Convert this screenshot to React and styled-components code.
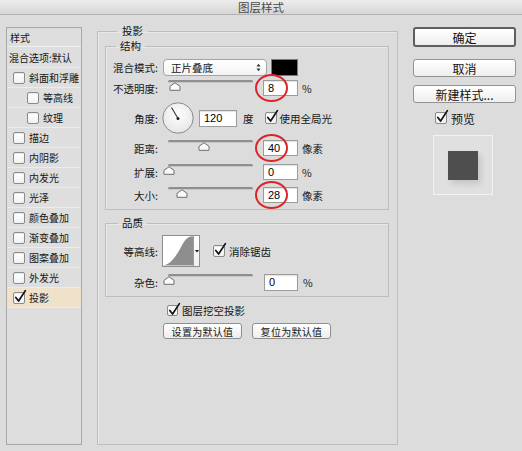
import React from 'react';
import styled, { createGlobalStyle } from 'styled-components';

const Global = createGlobalStyle`
  html, body { margin: 0; padding: 0; background: #dcdcdc; }
  body { font-family: "Noto Sans CJK SC", "Noto Sans", sans-serif; color: #161616; }
  * { box-sizing: border-box; }
`;

const Window = styled.div`
  width: 522px;
  height: 451px;
  display: flex;
  flex-direction: column;
  background: #dcdcdc;
  overflow: hidden;
`;

const TitleBar = styled.div`
  height: 15px;
  flex: none;
  display: flex;
  align-items: center;
  justify-content: center;
  background: linear-gradient(#ededed, #d6d6d6);
  border-bottom: 1px solid #b2b2b2;
  font-size: 11.5px;
  line-height: 12px;
  color: #484848;
`;

const Body = styled.div`
  flex: 1;
  display: flex;
  align-items: flex-start;
  padding: 9px 0 0 6px;
`;

/* ---------- left style list ---------- */
const StyleList = styled.div`
  margin-top: 3px;
  width: 76px;
  height: 418px;
  border: 1px solid #a8a8a8;
  background: #dedede;
  display: flex;
  flex-direction: column;
  font-size: 10px;
`;

const ListHeader = styled.div`
  height: 19px;
  display: flex;
  align-items: center;
  padding-left: 3px;
  border-bottom: 1px solid #efefef;
`;

const ListItem = styled.div`
  height: ${p => p.$h || 20}px;
  display: flex;
  align-items: center;
  gap: 4px;
  padding-left: ${p => p.$indent ? 20 : p.$plain ? 2 : 6}px;
  border-bottom: 1px solid #ececec;
  background: ${p => p.$active ? '#f0e1ca' : 'transparent'};
  white-space: nowrap;
`;

/* ---------- checkbox ---------- */
const Box = styled.span`
  position: relative;
  flex: none;
  width: ${p => p.$size || 12}px;
  height: ${p => p.$size || 12}px;
  border: 1px solid #8a8a8a;
  border-radius: 2px;
  background: linear-gradient(#ffffff, #f1f1f1);
  box-shadow: inset 0 1px 1px rgba(0,0,0,0.08);
`;

const CheckMark = styled.svg`
  position: absolute;
  left: 0px;
  top: -3px;
  overflow: visible;
`;

function Checkbox({ checked, size }) {
  return (
    <Box $size={size}>
      {checked && (
        <CheckMark width="12" height="13" viewBox="0 0 12 13">
          <path d="M1.8 7.4 L4.6 11 L11.4 0.6" fill="none" stroke="#111" strokeWidth="1.7" strokeLinecap="round" strokeLinejoin="round" />
        </CheckMark>
      )}
    </Box>
  );
}

/* ---------- group boxes ---------- */
const Group = styled.fieldset`
  margin: ${p => p.$mt || 0}px 0 0 0;
  min-width: 0;
  border: 1px solid #bdbdbd;
  box-shadow: inset 1px 1px 0 #e8e8e8;
  padding: ${p => p.$pad || '4px 0 4px 0'};
  font-size: 10.5px;
`;

const OuterGroup = styled(Group)`
  margin: 0 0 0 15px;
  width: 301px;
  height: 421px;
  padding: 1px 8px 0 7px;
`;

const Legend = styled.legend`
  margin-left: ${p => p.$ml || 10}px;
  padding: 0 ${p => p.$px || 4}px;
  font-size: 10.5px;
  line-height: 14px;
  color: #111;
`;

const Row = styled.div`
  display: flex;
  align-items: center;
  height: ${p => p.$h || 20}px;
  margin-top: ${p => p.$mt || 0}px;
  white-space: nowrap;
`;

const Label = styled.span`
  width: 52px;
  flex: none;
  text-align: right;
`;

const Gap = styled.span`
  flex: none;
  width: ${p => p.$w}px;
`;

/* select */
const Select = styled.div`
  width: 104px;
  height: 17px;
  border: 1px solid #a4a4a4;
  border-radius: 4px;
  background: linear-gradient(#ffffff, #f3f3f3);
  display: flex;
  align-items: center;
  justify-content: space-between;
  padding: 0 5px 0 7px;
  font-size: 10.5px;
`;

const Swatch = styled.div`
  width: 27px;
  height: 17px;
  background: #000;
  border: 1px solid #7a7a7a;
`;

/* slider */
const SliderWrap = styled.div`
  position: relative;
  width: 85px;
  height: 12px;
  align-self: flex-start;
  margin-top: 2px;
  flex: none;
`;

const Track = styled.div`
  height: 3px;
  border-radius: 2px;
  background: #8f8f8f;
  border-bottom: 1px solid #c8c8c8;
`;

const Thumb = styled.svg`
  position: absolute;
  top: 2px;
`;

function Slider({ pos }) {
  return (
    <SliderWrap>
      <Track />
      <Thumb width="12" height="9" viewBox="0 0 12 9" style={{ left: pos }}>
        <path d="M1 8.3 L1 4.3 L6 0.8 L11 4.3 L11 8.3 Z" fill="#fafafa" stroke="#6e6e6e" strokeWidth="1" />
      </Thumb>
    </SliderWrap>
  );
}

/* number field */
const FieldWrap = styled.div`
  position: relative;
  flex: none;
`;

const Field = styled.div`
  width: ${p => p.$w || 35}px;
  height: ${p => p.$h || 16}px;
  background: #fff;
  border: 1px solid #9c9c9c;
  box-shadow: inset 0 1px 1px rgba(0,0,0,0.12);
  display: flex;
  align-items: center;
  padding-left: 4px;
  font-family: "Liberation Sans", Arial, sans-serif;
  font-size: 11px;
  color: #000;
`;

const RedRing = styled.div`
  position: absolute;
  left: -8px;
  top: -6px;
  width: 33px;
  height: 28px;
  border: 2.5px solid #d9262a;
  border-radius: 50%;
  pointer-events: none;
`;

const Unit = styled.span`
  margin-left: ${p => p.$ml || 4}px;
`;

/* dial */
const Dial = styled.svg`
  flex: none;
  display: block;
`;

/* contour */
const Contour = styled.div`
  flex: none;
  width: 38px;
  height: 32px;
  border: 1px solid #8e8e8e;
  background: #fff;
  display: flex;
`;

const ContourGraph = styled.svg`
  display: block;
  border-right: 1px solid #9a9a9a;
`;

const ContourArrow = styled.div`
  flex: 1;
  display: flex;
  align-items: center;
  justify-content: center;
  background: linear-gradient(#ffffff, #f0f0f0);
`;

const Buttons = styled.div`
  display: flex;
  gap: 10px;
  margin-top: 7px;
  padding-left: 58px;
`;

const SmallButton = styled.div`
  width: 79px;
  height: 16px;
  border: 1px solid #8f8f8f;
  border-radius: 3px;
  background: linear-gradient(#ffffff, #ededed);
  display: flex;
  align-items: center;
  justify-content: center;
  font-size: 10px;
  letter-spacing: 0.3px;
`;

const CheckLine = styled.div`
  display: flex;
  align-items: center;
  gap: 4px;
  height: 12px;
  margin-top: ${p => p.$mt || 0}px;
  padding-left: ${p => p.$pl || 0}px;
  font-size: ${p => p.$fs || 10.5}px;
  white-space: nowrap;
`;

/* ---------- right column ---------- */
const Side = styled.div`
  margin: 3px 0 0 15px;
  width: 103px;
  display: flex;
  flex-direction: column;
`;

const Button = styled.div`
  height: ${p => p.$h || 18}px;
  margin-top: ${p => p.$mt || 0}px;
  border: ${p => p.$primary ? '2px solid #5f5f5f' : '1px solid #939393'};
  border-radius: 3px;
  background: linear-gradient(#ffffff, #eeeeee);
  display: flex;
  align-items: center;
  justify-content: center;
  font-size: 12px;
  color: #111;
`;

const Preview = styled.div`
  margin: 11px 0 0 20px;
  width: 60px;
  height: 60px;
  border: 1px solid #f2f2f2;
  background: #e0e0e0;
  display: flex;
  align-items: center;
  justify-content: center;
`;

const PreviewSquare = styled.div`
  width: 30px;
  height: 29px;
  background: #4e4e4e;
  box-shadow: 3px 4px 6px rgba(0,0,0,0.12);
`;

export default function App() {
  const left = [
    { t: '斜面和浮雕' },
    { t: '等高线', indent: true },
    { t: '纹理', indent: true },
    { t: '描边' },
    { t: '内阴影' },
    { t: '内发光' },
    { t: '光泽' },
    { t: '颜色叠加' },
    { t: '渐变叠加' },
    { t: '图案叠加' },
    { t: '外发光' },
    { t: '投影', checked: true, active: true },
  ];
  return (
    <>
      <Global />
      <Window>
        <TitleBar>图层样式</TitleBar>
        <Body>
          <StyleList>
            <ListHeader>样式</ListHeader>
            <ListItem $plain $h={21}>混合选项:默认</ListItem>
            {left.map(it => (
              <ListItem key={it.t} $indent={it.indent} $active={it.active}>
                <Checkbox checked={it.checked} />
                <span>{it.t}</span>
              </ListItem>
            ))}
          </StyleList>

          <OuterGroup>
            <Legend $ml={12} $px={5}>投影</Legend>

            <Group $pad="4px 0 4px 0">
              <Legend $ml={10}>结构</Legend>
              <Row>
                <Label>混合模式:</Label>
                <Gap $w={5} />
                <Select>
                  <span>正片叠底</span>
                  <svg width="5" height="9" viewBox="0 0 5 9">
                    <path d="M0.5 3.5 L2.5 0.8 L4.5 3.5 Z M0.5 5.5 L2.5 8.2 L4.5 5.5 Z" fill="#333" />
                  </svg>
                </Select>
                <Gap $w={4} />
                <Swatch />
              </Row>
              <Row $mt={1}>
                <Label>不透明度:</Label>
                <Gap $w={10} />
                <Slider pos={1} />
                <Gap $w={10} />
                <FieldWrap>
                  <Field>8</Field>
                  <RedRing />
                </FieldWrap>
                <Unit>%</Unit>
              </Row>
              <Row $mt={4} $h={32}>
                <Label>角度:</Label>
                <Gap $w={4} />
                <Dial width="32" height="32" viewBox="0 0 32 32">
                  <defs>
                    <radialGradient id="dialg" cx="50%" cy="40%" r="60%">
                      <stop offset="0%" stopColor="#ffffff" />
                      <stop offset="100%" stopColor="#e6e6e6" />
                    </radialGradient>
                  </defs>
                  <circle cx="16" cy="16" r="15.2" fill="url(#dialg)" stroke="#8a8a8a" strokeWidth="1" />
                  <line x1="16" y1="16.5" x2="9.5" y2="5.5" stroke="#333" strokeWidth="1.1" />
                  <circle cx="16" cy="16.5" r="1.5" fill="#222" />
                </Dial>
                <Gap $w={5} />
                <Field $w={38} $h={17}>120</Field>
                <Unit $ml={6}>度</Unit>
                <Gap $w={11} />
                <Checkbox checked />
                <Unit $ml={3}>使用全局光</Unit>
              </Row>
              <Row $mt={4}>
                <Label>距离:</Label>
                <Gap $w={10} />
                <Slider pos={30} />
                <Gap $w={10} />
                <FieldWrap>
                  <Field>40</Field>
                  <RedRing />
                </FieldWrap>
                <Unit>像素</Unit>
              </Row>
              <Row $mt={4}>
                <Label>扩展:</Label>
                <Gap $w={10} />
                <Slider pos={-5} />
                <Gap $w={10} />
                <Field>0</Field>
                <Unit>%</Unit>
              </Row>
              <Row $mt={3}>
                <Label>大小:</Label>
                <Gap $w={10} />
                <Slider pos={8} />
                <Gap $w={10} />
                <FieldWrap>
                  <Field>28</Field>
                  <RedRing />
                </FieldWrap>
                <Unit>像素</Unit>
              </Row>
            </Group>

            <Group $mt={6} $pad="4px 0 4px 0">
              <Legend $ml={12}>品质</Legend>
              <Row $h={34}>
                <Label>等高线:</Label>
                <Gap $w={4} />
                <Contour>
                  <ContourGraph width="31" height="30" viewBox="0 0 31 30">
                    <path d="M0 30 C9 28.5 14 19 18.5 11 C22 4.5 24.5 1 28.5 0 L31 0 L31 30 Z" fill="#8e8e8e" />
                  </ContourGraph>
                  <ContourArrow>
                    <svg width="4" height="3" viewBox="0 0 4 3">
                      <path d="M0 0 L4 0 L2 2.5 Z" fill="#111" />
                    </svg>
                  </ContourArrow>
                </Contour>
                <Gap $w={13} />
                <Checkbox checked />
                <Unit $ml={4}>消除锯齿</Unit>
              </Row>
              <Row $mt={4}>
                <Label>杂色:</Label>
                <Gap $w={10} />
                <Slider pos={-5} />
                <Gap $w={11} />
                <Field $w={34} $h={17}>0</Field>
                <Unit $ml={5}>%</Unit>
              </Row>
            </Group>

            <CheckLine $mt={7} $pl={62}>
              <Checkbox checked size={11} />
              <span>图层挖空投影</span>
            </CheckLine>
            <Buttons>
              <SmallButton>设置为默认值</SmallButton>
              <SmallButton>复位为默认值</SmallButton>
            </Buttons>
          </OuterGroup>

          <Side>
            <Button $primary $h={20}>确定</Button>
            <Button $mt={12}>取消</Button>
            <Button $mt={8}>新建样式...</Button>
            <CheckLine $mt={9} $pl={22} $fs={12}>
              <Checkbox checked />
              <span>预览</span>
            </CheckLine>
            <Preview>
              <PreviewSquare />
            </Preview>
          </Side>
        </Body>
      </Window>
    </>
  );
}
